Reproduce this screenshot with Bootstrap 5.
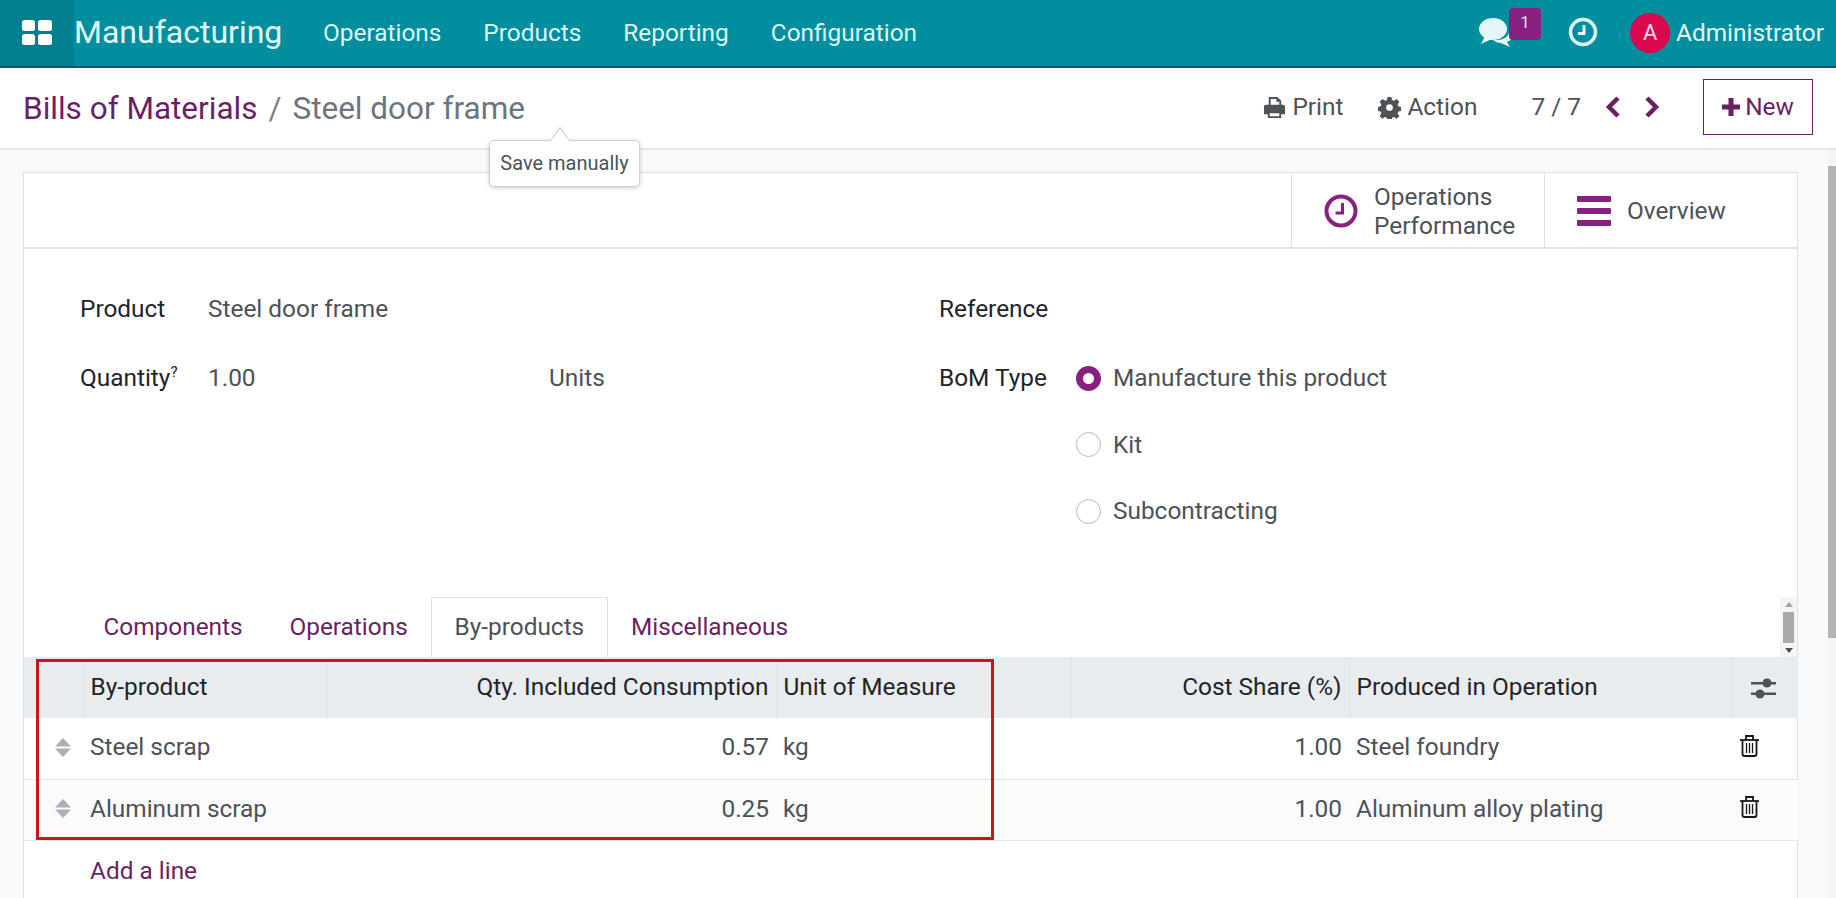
<!DOCTYPE html>
<html lang="en">
<head>
<meta charset="utf-8">
<title>Bills of Materials</title>
<link href="https://cdn.jsdelivr.net/npm/bootstrap@5.3.0/dist/css/bootstrap.min.css" rel="stylesheet">
<style>
html,body{height:898px;overflow:hidden}
body{font-family:Roboto,"Liberation Sans",sans-serif;font-size:24.4px;color:#4c5257;background:#f8f9fa;line-height:1.3}
.topbar{height:68px;background:#018e9e;border-bottom:2px solid #0c5a64;color:#dff7f7}
.appbtn{width:74px;height:66px;background:#017f8e}
.brandname{font-size:32px;color:#e2fbfa;width:249px}
.menuitem{color:#dff7f7;font-size:24.4px;text-decoration:none;margin-right:42px}
.notebadge{position:absolute;left:30px;top:-9px;width:32px;height:32px;background:#86217f;border-radius:4px;color:#e9dff0;font-size:17px;text-align:center;line-height:28px}
.chatwrap{position:relative;width:34px;height:30px;margin-right:54px;margin-top:-3px}
.chatwrap svg,.clockbtn svg{display:block}
.clockbtn{margin-right:31px;width:32px;height:32px;margin-top:-3px}
.avatarball{width:40px;height:40px;border-radius:50%;background:#d9084f;color:#fde;text-align:center;line-height:40px;font-size:22px;margin-right:6px}
.adminname{color:#e8fbfb;margin-right:12px}
.ctrlpanel{height:82px;background:#fff;border-bottom:2px solid #e4e6e8;padding:0 23px 0 23px}
.crumbs{padding-top:3px}
.crumblink{color:#6b1f63;font-size:31.5px;text-decoration:none}
.crumbsep{color:#7b8288;font-size:31.5px;margin:0 11px}
.crumbcur{color:#6c757d;font-size:31.5px}
.actiongroup{padding-bottom:2px}
.ctrlact{color:#4c5257;display:flex;align-items:center;gap:6px}
.printact{margin-right:35px}
.actionact{margin-right:54px}
.pagerlabel{margin-right:24px}
.pagerchev{margin-right:25px}
.newbtn{border:1px solid #6b1f63;color:#6b1f63;border-radius:0;width:110px;height:56px;font-size:24.4px;padding:0;margin-left:43px;display:flex;align-items:center;justify-content:center;gap:5px;background:#fff}
.workarea{height:748px;overflow:hidden}
.mainzone{padding:22px 30px 0 23px;overflow:hidden}
.sheetbox{background:#fff;border:1px solid #dfe2e5;border-bottom:0;height:760px}
.statbar{height:76px;border-bottom:2px solid #dfe2e5}
.statbtn{border-left:1px solid #dfe2e5;height:100%;width:253px;display:flex;align-items:center;gap:16px;padding:1px 0 0 32px;line-height:29px}
.fieldarea{padding:23.5px 57px 0 56px}
.fieldrow{height:66.5px;display:flex;align-items:center}
.fieldrow.firstrow{height:72.5px}
.fieldlabel{color:#212529;width:128px;flex:none}
.fieldlabel2{width:137px}
.qtyval{width:341px}
.fieldlabel sup{font-size:15px;top:-.6em}
.radioring{width:25px;height:25px;border-radius:50%;border:1px solid #b9b9b9;margin-right:12px;flex:none}
.radioon{border:7px solid #86217f}
.rightcol{padding-left:29px}
.tabstrip{margin-top:52px;padding-left:56px;border:0;height:60px;position:relative}
.tabstrip .nav-link{color:#6b1f63;padding:0 22.4px;height:60px;line-height:58px;border:1px solid transparent;border-bottom:0;border-radius:0;margin:0}
.tabstrip .nav-link.active{color:#4c5257;border-color:#dfe2e5;background:#fff}
.innerscroll{position:absolute;right:0;top:0;width:17px;height:60px;background:#f4f5f6}
.innerthumb{position:absolute;left:3px;right:3px;top:15px;height:31px;background:#a9a9a9}
.arrowup,.arrowdn{position:absolute;left:5px;border-left:4px solid transparent;border-right:4px solid transparent}
.arrowup{top:5px;border-bottom:5px solid #a3a3a3}
.arrowdn{bottom:4px;border-top:5px solid #505050}
.tablezone{position:relative}
.bomtable{table-layout:fixed;width:100%;margin:0;font-size:24.4px;color:#4c5257;border-collapse:collapse}
.bomtable th{background:#e9ecef;height:61px;font-weight:400;color:#212529;padding:0 7px;border-left:1px solid #e0e3e6;border-bottom:0;vertical-align:middle;--bs-table-bg:#e9ecef}
.bomtable th:first-child{border-left:0}
.bomtable th.optcell{padding:0 3px 0 0}
.bomtable td{height:61.5px;padding:0 7px 2px;vertical-align:middle;border-bottom:1px solid #e4e6e8;color:#4c5257}
.bomtable tr.altrow td{background:#fbfbfb;--bs-table-bg:#fbfbfb}
.bomtable td.handlecell{padding:0 12px 2px 0}
.bomtable td.trashcell{padding-left:8px}
.iconblock{display:block}
.handlecell .iconblock{margin-left:auto}
.trashicon{margin-top:-3px}
.addcell{color:#6b1f63;text-decoration:none}
.redframe{position:absolute;left:12px;top:2px;width:958px;height:181px;border:3px solid #c9151c;pointer-events:none}
.pagescroll{width:8px;background:#f3f4f5;position:relative;flex:none}
.pagethumb{position:absolute;left:0;right:0;top:16px;height:472px;background:#b4b4b4}
.savetip{position:absolute;left:489px;top:140px;width:151px;height:47px;background:#fff;border:1px solid #cfcfcf;border-radius:5px;box-shadow:0 1px 4px rgba(0,0,0,.2);font-size:20px;color:#4c5257;text-align:center;line-height:45px;z-index:5}
.savetip::before{content:"";position:absolute;left:62px;top:-9px;width:16px;height:16px;background:#fff;border-left:1px solid #cfcfcf;border-top:1px solid #cfcfcf;transform:rotate(45deg) skew(8deg,8deg)}
</style>
</head>
<body>
<nav class="navbar topbar p-0 d-flex flex-nowrap align-items-center justify-content-start">
  <div class="appbtn d-flex align-items-center justify-content-center flex-none">
    <svg width="32" height="26" viewBox="0 0 32 26" fill="#fff"><rect x="1" y="0" width="13" height="11" rx="2.5"/><rect x="17" y="0" width="14" height="11" rx="2.5"/><rect x="1" y="14" width="13" height="11" rx="2.5"/><rect x="17" y="14" width="14" height="11" rx="2.5"/></svg>
  </div>
  <span class="brandname">Manufacturing</span>
  <a class="menuitem" href="#">Operations</a>
  <a class="menuitem" href="#">Products</a>
  <a class="menuitem" href="#">Reporting</a>
  <a class="menuitem" href="#">Configuration</a>
  <div class="ms-auto d-flex align-items-center">
    <div class="chatwrap">
      <svg width="34" height="30" viewBox="0 0 34 30" fill="#e4f7f6"><ellipse cx="14" cy="12" rx="14" ry="11"/><path d="M6 19 L2 27 L13 22Z"/><path d="M30 13c3 2 4 5 3 8-1 2-3 3-5 4l3 5-9-4c-3 0-6-1-8-3 9 1 17-3 16-10z"/></svg>
      <span class="notebadge">1</span>
    </div>
    <div class="clockbtn">
      <svg width="32" height="32" viewBox="0 0 32 32" fill="none" stroke="#e4f7f6"><circle cx="16" cy="16" r="12.5" stroke-width="3.5"/><path d="M17 9v8.500h-6" stroke-width="3"/></svg>
    </div>
    <div class="avatarball">A</div>
    <span class="adminname">Administrator</span>
  </div>
</nav>

<div class="ctrlpanel d-flex align-items-center">
  <div class="crumbs"><a class="crumblink" href="#">Bills of Materials</a><span class="crumbsep">/</span><span class="crumbcur">Steel door frame</span></div>
  <div class="ms-auto d-flex align-items-center actiongroup">
    <span class="ctrlact printact">
      <svg width="23" height="23" viewBox="0 0 24 24" fill="#4c5257"><path d="M6 1h9l4 4v5h-2V6h-3V3H8v7H6zM1 11q0-2 2-2h18q2 0 2 2v7q0 1-1 1h-3v4H5v-4H2q-1 0-1-1zm6 7v3h10v-3z"/></svg>
      Print
    </span>
    <span class="ctrlact actionact">
      <svg width="23" height="23" viewBox="0 0 24 24" fill="#4c5257"><path fill-rule="evenodd" d="M10 1h4l.7 3.200 2 .8 2.800-1.800 2.800 2.800-1.800 2.800.8 2 3.200.7v4l-3.200.7-.8 2 1.800 2.800-2.800 2.800-2.800-1.800-2 .8-.7 3.200h-4l-.7-3.200-2-.8-2.800 1.800-2.800-2.800 1.800-2.800-.8-2-3.200-.7v-4l3.200-.7.8-2-1.800-2.800 2.800-2.800 2.800 1.800 2-.8zM12 8.500a3.500 3.500 0 1 0 0 7 3.500 3.500 0 0 0 0-7z"/></svg>
      Action
    </span>
    <span class="pagerlabel">7 / 7</span>
    <svg class="pagerchev" width="15" height="22" viewBox="0 0 15 22" fill="none" stroke="#6b1f63" stroke-width="4.500"><path d="M13 2 4 11l9 9"/></svg>
    <svg width="15" height="22" viewBox="0 0 15 22" fill="none" stroke="#6b1f63" stroke-width="4.500"><path d="M2 2l9 9-9 9"/></svg>
    <button class="btn newbtn" type="button">
      <svg width="18" height="18" viewBox="0 0 18 18" fill="#6b1f63"><path d="M6.500 0h5v6.500H18v5h-6.500V18h-5v-6.500H0v-5h6.500z"/></svg>
      New
    </button>
  </div>
</div>

<div class="savetip">Save manually</div>

<div class="workarea d-flex">
  <div class="mainzone flex-grow-1">
    <div class="sheetbox">
      <div class="statbar d-flex justify-content-end">
        <div class="statbtn">
          <svg class="flex-none" width="34" height="34" viewBox="0 0 34 34" fill="none" stroke="#86217f"><circle cx="17" cy="17" r="14.500" stroke-width="4"/><path d="M18.500 9v10h-7" stroke-width="3"/></svg>
          <span>Operations<br>Performance</span>
        </div>
        <div class="statbtn">
          <svg class="flex-none" width="34" height="30" viewBox="0 0 34 30" fill="#86217f"><rect width="34" height="6" rx="1"/><rect y="12" width="34" height="6" rx="1"/><rect y="24" width="34" height="6" rx="1"/></svg>
          <span>Overview</span>
        </div>
      </div>

      <div class="fieldarea row g-0">
        <div class="col-6">
          <div class="fieldrow firstrow"><span class="fieldlabel">Product</span><span>Steel door frame</span></div>
          <div class="fieldrow"><span class="fieldlabel">Quantity<sup>?</sup></span><span class="qtyval">1.00</span><span>Units</span></div>
        </div>
        <div class="col-6 rightcol">
          <div class="fieldrow firstrow"><span class="fieldlabel fieldlabel2">Reference</span></div>
          <div class="fieldrow"><span class="fieldlabel fieldlabel2">BoM Type</span><span class="radioring radioon"></span><span>Manufacture this product</span></div>
          <div class="fieldrow"><span class="fieldlabel fieldlabel2"></span><span class="radioring"></span><span>Kit</span></div>
          <div class="fieldrow"><span class="fieldlabel fieldlabel2"></span><span class="radioring"></span><span>Subcontracting</span></div>
        </div>
      </div>

      <ul class="nav tabstrip">
        <li class="nav-item"><a class="nav-link" href="#">Components</a></li>
        <li class="nav-item"><a class="nav-link" href="#">Operations</a></li>
        <li class="nav-item"><a class="nav-link active" href="#">By-products</a></li>
        <li class="nav-item"><a class="nav-link" href="#">Miscellaneous</a></li>
        <li class="innerscroll"><span class="arrowup"></span><span class="innerthumb"></span><span class="arrowdn"></span></li>
      </ul>

      <div class="tablezone">
        <table class="table bomtable">
          <colgroup><col style="width:59px"><col style="width:244px"><col style="width:449px"><col style="width:295px"><col style="width:278px"><col style="width:383px"><col style="width:66px"></colgroup>
          <thead>
            <tr>
              <th></th><th>By-product</th><th class="text-end">Qty. Included Consumption</th><th>Unit of Measure</th><th class="text-end">Cost Share (%)</th><th>Produced in Operation</th>
              <th class="text-center optcell"><svg width="25" height="21" viewBox="0 0 25 21" fill="#4c5257"><rect y="4" width="25" height="2.500"/><rect y="14.500" width="25" height="2.500"/><circle cx="16" cy="5" r="4.500"/><circle cx="9" cy="16" r="4.500"/></svg></th>
            </tr>
          </thead>
          <tbody>
            <tr>
              <td class="handlecell"><svg class="iconblock" width="16" height="19" viewBox="0 0 16 19" fill="#a9b0b7"><path d="M8 0l8 8.500H0zM0 10.500h16L8 19z"/></svg></td>
              <td>Steel scrap</td><td class="text-end">0.57</td><td>kg</td><td class="text-end">1.00</td><td>Steel foundry</td>
              <td class="trashcell"><svg class="iconblock trashicon" width="19" height="22" viewBox="0 0 19 22" fill="none" stroke="#15171a" stroke-width="1.800"><path d="M0 5h19"/><path d="M6 5V1h7v4"/><path d="M2.500 5v14q0 2 2 2h10q2 0 2-2V5"/><path d="M6.500 8v10M9.500 8v10M12.500 8v10" stroke-width="1.300"/></svg></td>
            </tr>
            <tr class="altrow">
              <td class="handlecell"><svg class="iconblock" width="16" height="19" viewBox="0 0 16 19" fill="#a9b0b7"><path d="M8 0l8 8.500H0zM0 10.500h16L8 19z"/></svg></td>
              <td>Aluminum scrap</td><td class="text-end">0.25</td><td>kg</td><td class="text-end">1.00</td><td>Aluminum alloy plating</td>
              <td class="trashcell"><svg class="iconblock trashicon" width="19" height="22" viewBox="0 0 19 22" fill="none" stroke="#15171a" stroke-width="1.800"><path d="M0 5h19"/><path d="M6 5V1h7v4"/><path d="M2.500 5v14q0 2 2 2h10q2 0 2-2V5"/><path d="M6.500 8v10M9.500 8v10M12.500 8v10" stroke-width="1.300"/></svg></td>
            </tr>
            <tr>
              <td class="border-0"></td><td class="border-0" colspan="6"><a class="addcell" href="#">Add a line</a></td>
            </tr>
          </tbody>
        </table>
        <div class="redframe"></div>
      </div>
    </div>
  </div>
  <div class="pagescroll"><span class="pagethumb"></span></div>
</div>
<script src="https://cdn.jsdelivr.net/npm/bootstrap@5.3.0/dist/js/bootstrap.bundle.min.js"></script>
</body>
</html>
